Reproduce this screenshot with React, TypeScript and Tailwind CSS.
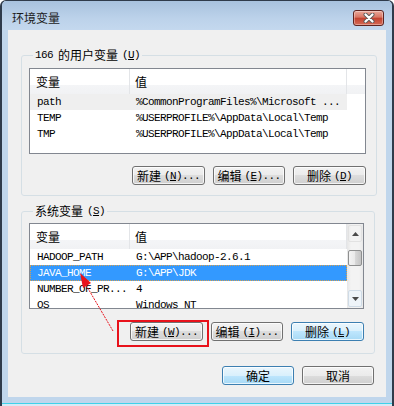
import React from 'react'

const CJK = "font-['Noto_Sans_CJK_SC',sans-serif]"
const MONO = "font-['Liberation_Mono',monospace] text-[11px] tracking-[-0.6px]"

type Row = { k: string; v: string; sel?: boolean; hover?: boolean }

const userRows: Row[] = [
  { k: 'path', v: '%CommonProgramFiles%\\Microsoft ...', hover: true },
  { k: 'TEMP', v: '%USERPROFILE%\\AppData\\Local\\Temp' },
  { k: 'TMP', v: '%USERPROFILE%\\AppData\\Local\\Temp' },
]

const sysRows: Row[] = [
  { k: 'HADOOP_PATH', v: 'G:\\APP\\hadoop-2.6.1' },
  { k: 'JAVA_HOME', v: 'G:\\APP\\JDK', sel: true },
  { k: 'NUMBER_OF_PR...', v: '4' },
  { k: 'OS', v: 'Windows_NT' },
]

function Btn({ cjk, mn, dots, w, blue }: { cjk: string; mn?: string; dots?: boolean; w: string; blue?: boolean }) {
  return (
    <button
      className={`${w} h-[19px] rounded-[3px] border flex items-center justify-center text-black shadow-[inset_0_0_0_1px_rgba(255,255,255,0.75)] ${
        blue
          ? 'border-[#3c7fb1] bg-[linear-gradient(#eaf6fd,#d9f0fc_50%,#bee6fd_50%,#a7d9f5)]'
          : 'border-[#707070] bg-[linear-gradient(#f2f2f2,#ebebeb_50%,#dddddd_50%,#cfcfcf)]'
      }`}
    >
      <span className={`${CJK} text-[12px] leading-[14px]`}>{cjk}</span>
      {mn && (
        <span className={`${MONO} ml-[3px] leading-[14px]`}>
          (<span className="underline">{mn}</span>){dots ? '...' : ''}
        </span>
      )}
    </button>
  )
}

function Header({ filler }: { filler?: boolean }) {
  const bg = 'bg-[linear-gradient(#ffffff,#ffffff_62%,#f4f5f7_62%,#f1f2f4)]'
  return (
    <div className={`h-[25px] shrink-0 flex ${bg}`}>
      <div className={`w-[100px] border-r border-[#e3e5e8] pl-[6px] pt-[1px] ${CJK} text-[12px] leading-[14px] flex items-center`}>变量</div>
      <div className={`w-[217px] border-r border-[#e3e5e8] pl-[5px] pt-[1px] ${CJK} text-[12px] leading-[14px] flex items-center`}>值</div>
      {filler && <div className="flex-1" />}
    </div>
  )
}

function Arrow({ up }: { up?: boolean }) {
  return (
    <svg width="7" height="4" viewBox="0 0 7 4">
      <polygon points={up ? '3.5,0 7,4 0,4' : '0,0 7,0 3.5,4'} fill="#4a4a4a" />
    </svg>
  )
}

function Scrollbar() {
  return (
    <div className="w-[17px] h-full flex flex-col bg-[linear-gradient(90deg,#e6e6e6,#f3f3f3_25%,#f3f3f3_75%,#e9e9e9)]">
      <div className="h-[17px] m-[1px] rounded-[2px] border border-[#e2e2e2] flex items-center justify-center">
        <Arrow up />
      </div>
      <div className="h-[7px]" />
      <div className="h-[16px] mx-[1px] rounded-[2px] border border-[#8e8f8f] bg-[linear-gradient(90deg,#f4f4f4,#e9e9e9_50%,#d9d9d9_50%,#c4c4c4)]" />
      <div className="flex-1" />
      <div className="h-[17px] m-[1px] rounded-[2px] border border-[#cfdbe6] bg-[#eef4f9] flex items-center justify-center">
        <Arrow />
      </div>
    </div>
  )
}

function List({ rows, w, scroll }: { rows: Row[]; w: string; scroll?: boolean }) {
  return (
    <div className={`${w} h-[86px] border border-[#828790] bg-white flex overflow-hidden`}>
      <div className={`${scroll ? 'w-[317px]' : 'flex-1'} flex flex-col`}>
        <Header filler={!scroll} />
        {rows.map(r => (
          <div
            key={r.k}
            className={`w-[317px] h-[16px] shrink-0 flex items-center ${MONO} leading-[16px] ${
              r.sel
                ? 'bg-[#3399ff] text-white outline outline-1 outline-dotted outline-offset-[-1px] outline-[#d9a04c]'
                : r.hover
                ? 'bg-[#efefef] text-black'
                : 'text-black'
            }`}
          >
            <span className="w-[100px] pl-[7px] whitespace-nowrap overflow-hidden">{r.k}</span>
            <span className="w-[217px] pl-[6px] whitespace-nowrap overflow-hidden">{r.v}</span>
          </div>
        ))}
      </div>
      {scroll && <Scrollbar />}
    </div>
  )
}

export default function App() {
  return (
    <div className="w-[394px] h-[406px] bg-white">
      <div className="relative w-[394px] h-[406px] flex flex-col bg-[#c0d6ec] border-x-2 border-t border-[#2f3b4b] rounded-t-[6px] overflow-hidden">
        {/* Title bar */}
        <div className="h-[29px] shrink-0 flex items-start justify-between bg-[linear-gradient(#a8c2de,#bcd2ea_60%,#c4d8ee)]">
          <span className={`ml-[10px] mt-[10px] ${CJK} text-[12px] leading-[14px] text-[#1b1b1b]`}>环境变量</span>
          <div className="mr-[8px] mt-[9px] w-[31px] h-[16px] rounded-[3px] border border-[#5e2420] bg-[linear-gradient(#eaa89a,#d87563_45%,#c2412f_50%,#d56a55)] flex items-center justify-center shadow-[inset_0_0_0_1px_rgba(255,255,255,0.35)]">
            <svg width="14" height="10" viewBox="0 0 14 10">
              <path d="M3.5 1.5 L10.5 8.5 M10.5 1.5 L3.5 8.5" stroke="#5b5b5b" strokeWidth="4" strokeLinecap="round" fill="none" />
              <path d="M3.5 1.5 L10.5 8.5 M10.5 1.5 L3.5 8.5" stroke="#ffffff" strokeWidth="2.2" strokeLinecap="round" fill="none" />
            </svg>
          </div>
        </div>

        {/* Client area */}
        <div className="mx-[6px] h-[367px] shrink-0 bg-[#f0f0f0] pt-[18px] flex flex-col">
          {/* User variables */}
          <fieldset className="ml-[13px] w-[354px] border border-[#d5dfe5] rounded-[3px] pl-[7px] pr-[10px] pb-[10px]">
            <legend className={`ml-[4px] px-[2px] h-[14px] flex items-center ${CJK} text-[12px] leading-[14px] text-black`}>
              <span className={MONO}>166</span>
              <span className="ml-[5px]">的用户变量</span>
              <span className={`${MONO} ml-[4px]`}>(<span className="underline">U</span>)</span>
            </legend>
            <div className="mt-[6px]">
              <List rows={userRows} w="w-[337px]" />
            </div>
            <div className="mt-[12px] flex justify-end gap-[8px]">
              <Btn cjk="新建" mn="N" dots w="w-[73px]" />
              <Btn cjk="编辑" mn="E" dots w="w-[72px]" />
              <Btn cjk="删除" mn="D" w="w-[73px]" />
            </div>
          </fieldset>

          {/* System variables */}
          <fieldset className="mt-[8px] ml-[13px] w-[354px] border border-[#d5dfe5] rounded-[3px] pl-[7px] pr-[10px] pb-[12px]">
            <legend className={`ml-[4px] px-[2px] h-[14px] flex items-center ${CJK} text-[12px] leading-[14px] text-black`}>
              <span>系统变量</span>
              <span className={`${MONO} ml-[4px]`}>(<span className="underline">S</span>)</span>
            </legend>
            <div className="mt-[5px]">
              <List rows={sysRows} w="w-[335px]" scroll />
            </div>
            <div className="mt-[13px] flex justify-end gap-[8px]">
              <Btn cjk="新建" mn="W" dots w="w-[73px]" />
              <Btn cjk="编辑" mn="I" dots w="w-[72px]" />
              <Btn cjk="删除" mn="L" w="w-[73px]" blue />
            </div>
          </fieldset>

          {/* Dialog buttons */}
          <div className="mt-[12px] pr-[12px] flex justify-end gap-[8px]">
            <Btn cjk="确定" w="w-[72px]" blue />
            <Btn cjk="取消" w="w-[72px]" />
          </div>
        </div>

        <div className="h-[6px] shrink-0" />
        <div className="h-[1px] shrink-0 bg-[#3fd2ea]" />
        <div className="flex-1 bg-[#d8eaf6]" />

        {/* Annotation overlay */}
        <div className="absolute left-[115px] top-[319px] w-[92px] h-[27px] border-2 border-[#e8121b] pointer-events-none" />
        <svg className="absolute left-[-2px] top-[-1px] pointer-events-none" width="394" height="406" viewBox="0 0 394 406">
          <line x1="113" y1="331" x2="86" y2="285" stroke="#e8121b" strokeWidth="1" strokeDasharray="2 1" />
          <polygon points="80,273 91,283 83,288" fill="#e8121b" />
        </svg>
      </div>
    </div>
  )
}
